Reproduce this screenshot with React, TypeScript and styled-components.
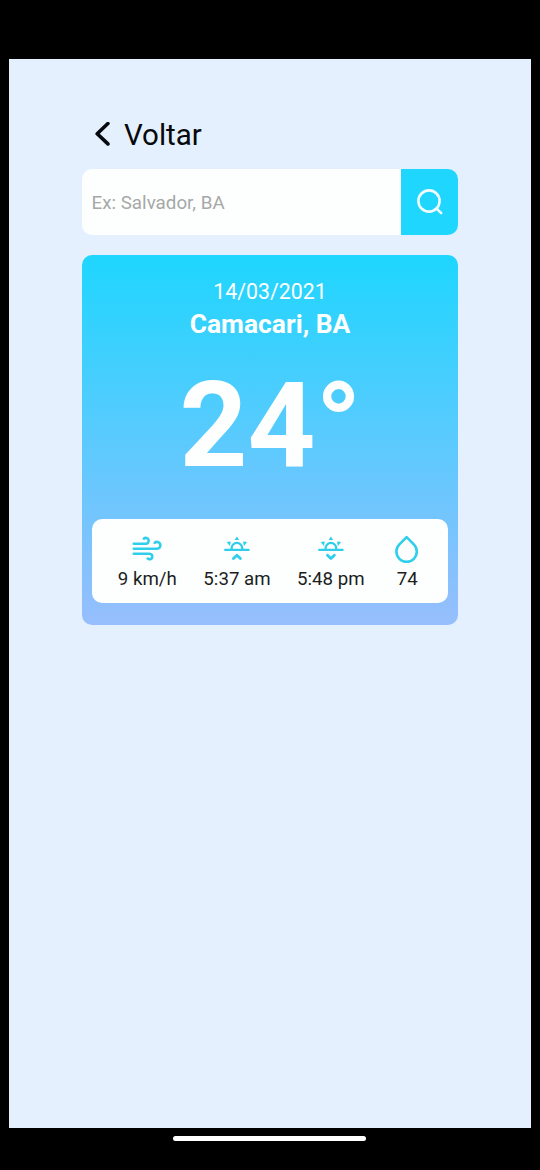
import React from 'react';
import styled, { createGlobalStyle } from 'styled-components';

const GlobalStyle = createGlobalStyle`
  * { box-sizing: border-box; }
  body { margin: 0; background: #000; font-family: Roboto, sans-serif; }
`;

const Device = styled.div`
  display: flex;
  flex-direction: column;
  align-items: center;
  width: 540px;
  height: 1170px;
  padding-top: 59px;
  overflow: hidden;
  background: #000;
`;

const Screen = styled.main`
  display: flex;
  flex-direction: column;
  width: 522px;
  height: 1069px;
  padding: 55px 73px 0;
  background: #e4f0fd;
`;

const HomeIndicator = styled.div`
  width: 193px;
  height: 5px;
  margin-top: 8px;
  margin-right: 1px;
  border-radius: 3px;
  background: #fff;
`;

const BackButton = styled.button`
  display: flex;
  align-items: center;
  gap: 14px;
  height: 42px;
  margin: 0 0 13px;
  padding: 0 0 0 13px;
  border: 0;
  background: none;
  color: #06090d;
  font: 400 29.5px/42px Roboto, sans-serif;
`;

const SearchBar = styled.form`
  display: flex;
  height: 66px;
  margin-bottom: 20px;
  border-radius: 10px;
  overflow: hidden;
  background: #fdfffe;
`;

const SearchInput = styled.input`
  flex: 1;
  min-width: 0;
  padding: 2px 0 0 9.5px;
  border: 0;
  outline: 0;
  background: transparent;
  color: #222;
  font: 400 18.8px Roboto, sans-serif;
  &::placeholder { color: #a6a8a8; opacity: 1; }
`;

const SearchButton = styled.button`
  display: flex;
  align-items: center;
  justify-content: center;
  width: 57px;
  padding: 0;
  border: 0;
  background: #1ed6fe;
`;

const WeatherCard = styled.section`
  display: flex;
  flex-direction: column;
  align-items: center;
  height: 370px;
  padding: 21px 10px 0;
  border-radius: 10px;
  background: linear-gradient(#1ed6fe, #97befd);
  color: #fdfffe;
`;

const DateLabel = styled.div`
  height: 31px;
  font-size: 21.3px;
  line-height: 32px;
`;

const City = styled.h1`
  height: 34px;
  margin: 0;
  font-size: 26.4px;
  font-weight: 700;
  line-height: 34px;
`;

const Temperature = styled.div`
  height: 178px;
  padding-left: 1px;
  font-size: 118.5px;
  font-weight: 700;
  line-height: 169px;
`;

const Details = styled.div`
  display: flex;
  justify-content: center;
  gap: 26.5px;
  width: 356px;
  height: 84px;
  padding: 16px 0 0 1px;
  border-radius: 10px;
  background: #fdfffe;
`;

const Detail = styled.div`
  display: flex;
  flex-direction: column;
  align-items: center;
  color: #1c1e1e;
  font-size: 18.7px;
  line-height: 28px;
  white-space: nowrap;
`;

const DetailIcon = styled.svg`
  display: block;
  width: 32px;
  height: 30px;
  fill: none;
  stroke: #2fcfeb;
  stroke-width: 2.6;
  stroke-linecap: round;
  stroke-linejoin: round;
`;

const WindIcon = () => (
  <DetailIcon viewBox="0 0 32 30">
    <path d="M2.8 8.7H14.8A2.9 2.9 0 1 0 12.8 3.7M2.8 13.7H26A3.4 3.4 0 1 0 23.7 7.8M2.8 18.7H18.5A2.8 2.8 0 1 1 16.7 23.6" />
  </DetailIcon>
);

const SunIcon = ({ direction }: { direction: 'up' | 'down' }) => (
  <DetailIcon viewBox="0 0 32 30">
    <path d="M4.2 14.9H27.6M10.6 14.4V13.2A5.3 5.3 0 0 1 21.2 13.2V14.4" strokeWidth="2.3" />
    <path
      d="M13.6 5.1L15.9 1.6L18.2 5.1ZM5.6 6.9L9.8 6.5L8.9 11ZM26.2 6.9L22 6.5L22.9 11Z"
      fill="#2fcfeb"
      stroke="none"
    />
    <path d={direction === 'up' ? 'M12.4 23.6L15.9 20.3L19.4 23.6' : 'M12.4 20.3L15.9 23.6L19.4 20.3'} strokeWidth="2.8" />
  </DetailIcon>
);

const DropIcon = () => (
  <DetailIcon viewBox="0 0 32 30">
    <path d="M15.6 2.2L22.8 9.4A10.2 10.2 0 1 1 8.4 9.4Z" />
  </DetailIcon>
);

const details = [
  { icon: <WindIcon />, value: '9 km/h' },
  { icon: <SunIcon direction="up" />, value: '5:37 am' },
  { icon: <SunIcon direction="down" />, value: '5:48 pm' },
  { icon: <DropIcon />, value: '74' },
];

export default function App() {
  return (
    <>
      <GlobalStyle />
      <Device>
        <Screen>
          <BackButton type="button">
            <svg width="15" height="26" viewBox="0 0 15 26" fill="none" stroke="currentColor" strokeWidth="3.6" strokeLinecap="round" strokeLinejoin="round">
              <path d="M12.9 1.5L2.2 11.7L12.9 21.9" />
            </svg>
            Voltar
          </BackButton>
          <SearchBar>
            <SearchInput placeholder="Ex: Salvador, BA" />
            <SearchButton type="button" aria-label="Buscar">
              <svg width="28" height="28" viewBox="0 0 28 28" fill="none" stroke="#effcff" strokeWidth="2.6" strokeLinecap="round">
                <circle cx="13" cy="13" r="10.6" />
                <path d="M20.5 20.5L25.2 25.2" />
              </svg>
            </SearchButton>
          </SearchBar>
          <WeatherCard>
            <DateLabel>14/03/2021</DateLabel>
            <City>Camacari, BA</City>
            <Temperature>24°</Temperature>
            <Details>
              {details.map(({ icon, value }) => (
                <Detail key={value}>
                  {icon}
                  {value}
                </Detail>
              ))}
            </Details>
          </WeatherCard>
        </Screen>
        <HomeIndicator />
      </Device>
    </>
  );
}
